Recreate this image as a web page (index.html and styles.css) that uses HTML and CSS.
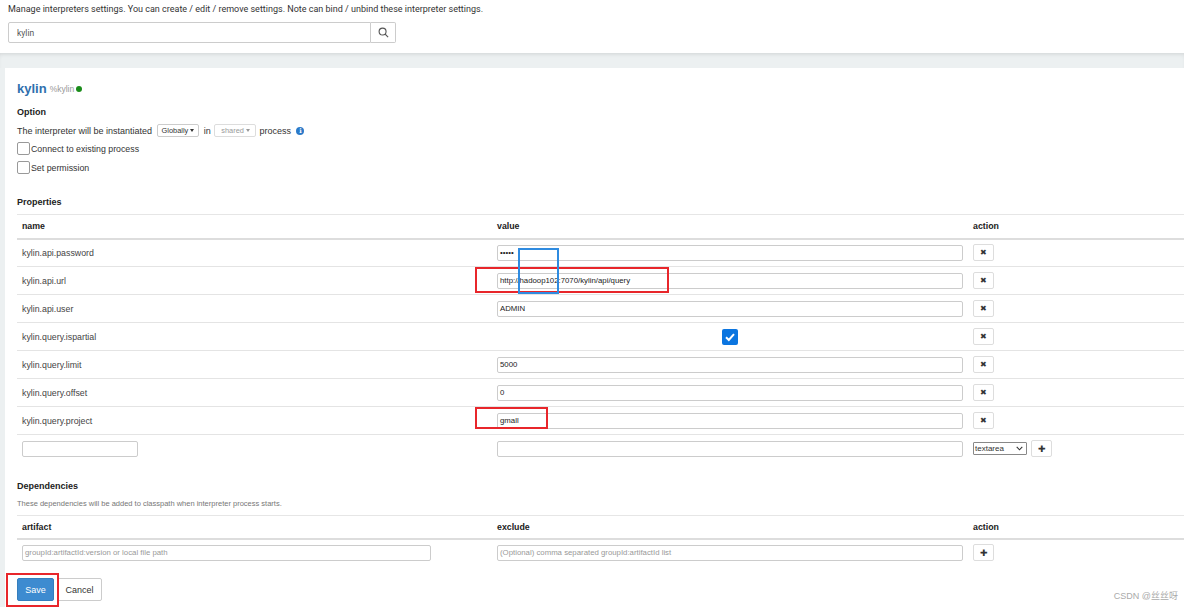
FILE: index.html
```html
<!DOCTYPE html>
<html>
<head>
<meta charset="utf-8">
<link rel="stylesheet" href="styles.css">
</head>
<body>
<div class="page">
  <header class="top">
    <p class="intro">Manage interpreters settings. You can create / edit / remove settings. Note can bind / unbind these interpreter settings.</p>
    <div class="search">
      <input class="search-input" type="text" value="kylin">
      <button class="search-btn" type="button" aria-label="search">
        <svg width="11" height="11" viewBox="0 0 12 12"><circle cx="5" cy="5" r="3.8" fill="none" stroke="#555" stroke-width="1.2"/><line x1="7.8" y1="7.8" x2="11" y2="11" stroke="#555" stroke-width="1.3"/></svg>
      </button>
    </div>
  </header>
  <div class="band"></div>
  <main class="card">
    <h2 class="title"><span class="name">kylin</span><span class="alias">%kylin</span><span class="dot"></span></h2>
    <h4 class="section opt">Option</h4>
    <div class="inst">The interpreter will be instantiated <span class="dd glob">Globally<i class="caret"></i></span> in <span class="dd dis">shared<i class="caret"></i></span> process <span class="info">i</span></div>
    <label class="chk"><span class="box"></span>Connect to existing process</label>
    <label class="chk"><span class="box"></span>Set permission</label>

    <h4 class="section props">Properties</h4>
    <table class="tbl">
      <colgroup><col class="c1"><col class="c2"><col class="c3"></colgroup>
      <thead><tr><th>name</th><th>value</th><th>action</th></tr></thead>
      <tbody>
        <tr><td>kylin.api.password</td><td><div class="inp">•••••</div></td><td><span class="abtn">✖</span></td></tr>
        <tr><td>kylin.api.url</td><td><div class="inp">http://hadoop102:7070/kylin/api/query</div></td><td><span class="abtn">✖</span></td></tr>
        <tr><td>kylin.api.user</td><td><div class="inp">ADMIN</div></td><td><span class="abtn">✖</span></td></tr>
        <tr><td>kylin.query.ispartial</td><td class="center"><span class="checked"><svg width="12" height="12" viewBox="0 0 12 12"><path d="M2 6.3 L4.8 9 L10 3.2" fill="none" stroke="#fff" stroke-width="2"/></svg></span></td><td><span class="abtn">✖</span></td></tr>
        <tr><td>kylin.query.limit</td><td><div class="inp">5000</div></td><td><span class="abtn">✖</span></td></tr>
        <tr><td>kylin.query.offset</td><td><div class="inp">0</div></td><td><span class="abtn">✖</span></td></tr>
        <tr><td>kylin.query.project</td><td><div class="inp">gmall</div></td><td><span class="abtn">✖</span></td></tr>
        <tr class="newrow"><td><div class="inp short"></div></td><td><div class="inp"></div></td><td class="acts"><span class="sel">textarea<svg width="7" height="5" viewBox="0 0 7 5"><path d="M0.7 0.8 L3.5 3.8 L6.3 0.8" fill="none" stroke="#333" stroke-width="1.1"/></svg></span><span class="abtn plus">✚</span></td></tr>
      </tbody>
    </table>

    <h4 class="section deps">Dependencies</h4>
    <p class="desc">These dependencies will be added to classpath when interpreter process starts.</p>
    <table class="tbl dtbl">
      <colgroup><col class="c1"><col class="c2"><col class="c3"></colgroup>
      <thead><tr><th>artifact</th><th>exclude</th><th>action</th></tr></thead>
      <tbody>
        <tr><td><div class="inp ph art">groupId:artifactId:version or local file path</div></td><td><div class="inp ph">(Optional) comma separated groupId:artifactId list</div></td><td><span class="abtn plus">✚</span></td></tr>
      </tbody>
    </table>
    <div class="btns"><button class="btn save" type="button">Save</button><button class="btn cancel" type="button">Cancel</button></div>
  </main>
  <div class="mark red m1"></div>
  <div class="mark blue m2"></div>
  <div class="mark red m3"></div>
  <div class="mark red m4"></div>
  <div class="wm">CSDN @丝丝呀</div>
</div>
</body>
</html>
```
FILE: styles.css
```css
* { box-sizing: border-box; }
html, body { margin: 0; padding: 0; background: #fff; }
body { width: 1184px; height: 607px; overflow: hidden; font-family: "Liberation Sans", Arial, sans-serif; color: #333; font-size: 9px; }
.page { position: relative; width: 1184px; height: 607px; background: #ecf0f1; }
.top { background: #fff; height: 53px; padding: 3px 8px 0; }
.intro { margin: 0; font-family: Roboto, "Liberation Sans", sans-serif; font-size: 9px; line-height: 12px; color: #333; }
.search { display: flex; margin-top: 7px; width: 388px; height: 21px; }
.search-input { flex: 1; height: 21px; border: 1px solid #ccc; border-radius: 2px 0 0 2px; padding: 0 8px; font-family: Roboto, "Liberation Sans", sans-serif; font-size: 8.5px; color: #555; outline: none; }
.search-btn { width: 25px; height: 21px; border: 1px solid #ccc; border-left: none; border-radius: 0 2px 2px 0; background: #fff; display: flex; align-items: center; justify-content: center; padding: 0; }
.band { height: 15px; box-shadow: inset 0 3px 4px -2px rgba(0,0,0,0.12); }
.card { background: #fff; margin-left: 5px; height: 539px; padding: 12px 0 0 12px; }
.title { margin: 0; display: flex; align-items: center; height: 16px; font-weight: normal; }
.title .name { font-size: 13px; font-weight: bold; color: #2f6fad; }
.title .alias { font-size: 8.5px; color: #999; margin-left: 3px; margin-top: 2px; }
.title .dot { width: 6px; height: 6px; border-radius: 50%; background: #1a8c1a; margin-left: 2px; margin-top: 2px; }
.section { margin: 0; font-size: 9px; font-weight: bold; color: #222; line-height: 12px; }
.opt { margin-top: 10px; }
.inst { margin-top: 6px; display: flex; align-items: center; height: 13px; font-size: 9px; color: #333; white-space: pre; }
.dd { display: inline-flex; align-items: center; height: 13px; padding: 0 4px; border: 1px solid #ccc; border-radius: 2px; font-size: 7.4px; color: #333; }
.dd.glob { margin: 0 2px; }
.dd.dis { color: #999; border-color: #ddd; padding: 0 5px 0 6px; margin: 0 1px; }
.caret { display: inline-block; width: 0; height: 0; border-left: 2.5px solid transparent; border-right: 2.5px solid transparent; border-top: 3px solid #333; margin-left: 2px; }
.dd.dis .caret { border-top-color: #999; }
.info { display: inline-flex; width: 8px; height: 8px; border-radius: 50%; background: #2b7ac9; color: #fff; font-size: 6.5px; font-weight: bold; align-items: center; justify-content: center; margin-left: 3px; font-family: "DejaVu Serif", serif; }
.chk { display: flex; align-items: center; height: 19px; font-size: 8.8px; color: #333; }
.inst + .chk { margin-top: 2px; }
.box { width: 13px; height: 13px; border: 1px solid #999; border-radius: 2px; background: #fff; margin-right: 1px; }
.props { margin-top: 19px; }
.tbl { border-collapse: collapse; table-layout: fixed; width: 1167px; margin-top: 6px; }
.c1 { width: 475px; } .c2 { width: 476px; } .c3 { width: 216px; }
.tbl th { text-align: left; font-size: 8.8px; font-weight: bold; color: #222; padding: 0 5px; height: 24px; border-top: 1px solid #e6e6e6; border-bottom: 2px solid #ddd; }
.tbl td { padding: 0 5px; height: 28px; border-bottom: 1px solid #e4e4e4; font-size: 8.8px; color: #444; vertical-align: middle; }
.tbl tr.newrow td { border-bottom: none; }
.inp { height: 16px; border: 1px solid #ccc; border-radius: 2px; padding: 0 2px; font-size: 7.8px; line-height: 14px; color: #222; width: 466px; white-space: nowrap; overflow: hidden; }
.inp.short { width: 116px; }
.inp.ph { color: #999; }
.inp.art { width: 409px; }
.center { text-align: center; }
.checked { display: inline-flex; width: 16px; height: 16px; border-radius: 2px; background: #0b75e0; align-items: center; justify-content: center; vertical-align: middle; }
.abtn { display: inline-flex; width: 21px; height: 17px; border: 1px solid #ddd; border-radius: 2px; align-items: center; justify-content: center; font-size: 8px; color: #333; background: #fff; vertical-align: middle; }
.abtn.plus { font-size: 9px; }
.acts { white-space: nowrap; }
.sel { display: inline-flex; align-items: center; justify-content: space-between; width: 54px; height: 13px; border: 1px solid #888; border-radius: 1px; padding: 0 3px 0 1px; font-size: 8px; color: #333; vertical-align: middle; margin-right: 4px; }
.deps { margin-top: 17px; }
.desc { margin: 7px 0 0; font-size: 7.5px; color: #777; line-height: 10px; }
.dtbl { margin-top: 6px; }
.dtbl td { border-bottom: none; height: 26px; }
.btns { display: flex; gap: 3px; margin-top: 13px; }
.btn { height: 23px; border-radius: 2px; font-family: "Liberation Sans", Arial, sans-serif; font-size: 9px; padding: 0 8px; }
.save { background: #3d8bd0; border: 1px solid #357ebd; color: #fff; width: 37px; padding: 0; }
.cancel { background: #fff; border: 1px solid #ccc; color: #333; width: 45px; padding: 0; }
.mark { position: absolute; border: 2px solid #e8262b; }
.m1 { left: 475px; top: 267px; width: 194px; height: 26px; }
.m2 { left: 518px; top: 248px; width: 41px; height: 46px; border-color: #2f8be0; }
.m3 { left: 475px; top: 407px; width: 73px; height: 22px; }
.m4 { left: 6px; top: 573px; width: 53px; height: 34px; }
.wm { position: absolute; right: 6px; bottom: 5px; font-size: 9px; color: #aaa; font-family: "Liberation Sans", "Noto Sans CJK SC", sans-serif; }
```
